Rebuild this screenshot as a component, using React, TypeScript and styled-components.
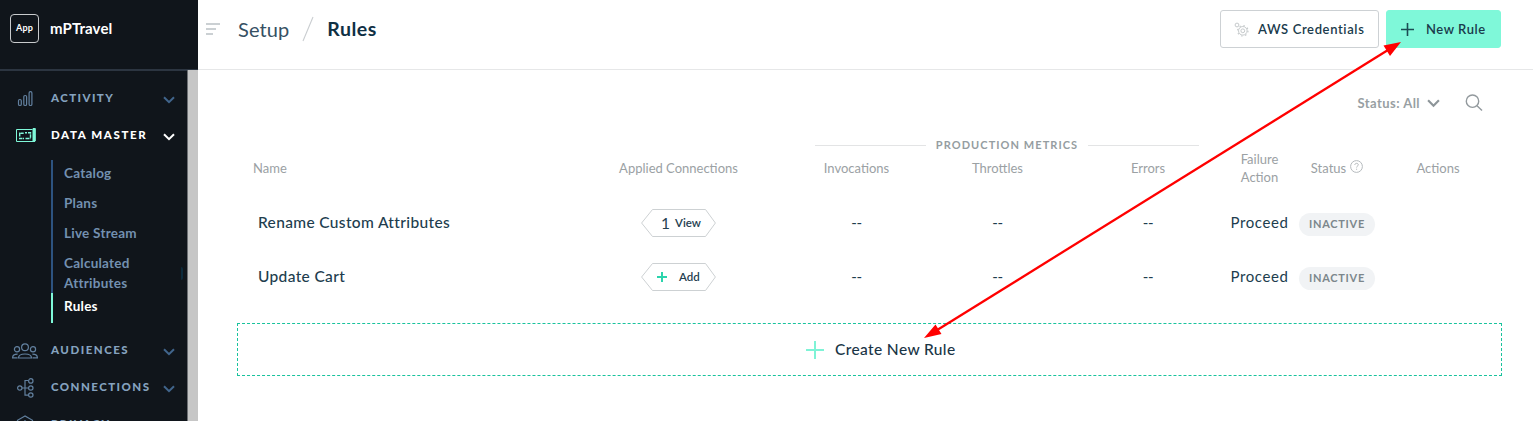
import React from "react";
import styled, { createGlobalStyle } from "styled-components";

const GlobalStyle = createGlobalStyle`
  * { box-sizing: border-box; }
  html, body { margin: 0; padding: 0; height: 421px; overflow: hidden; background: #fff; }
  body { font-family: Lato, "Open Sans", sans-serif; color: #1a3546; }
  svg { display: block; flex: none; }
`;

const Page = styled.div`
  position: relative;
  display: flex;
  width: 1533px;
  height: 421px;
  overflow: hidden;
`;

const Sidebar = styled.aside`
  display: flex;
  flex-direction: column;
  width: 198px;
  height: 421px;
  background: #10151b;
`;

const Brand = styled.div`
  display: flex;
  flex: none;
  gap: 11px;
  height: 70px;
  padding: 14px 0 0 10px;
  border-bottom: 1px solid #2c3541;
`;

const AppBadge = styled.div`
  width: 29px;
  height: 29px;
  border: 1px solid #c9cbcd;
  border-radius: 4px;
  color: #fff;
  font-size: 9px;
  font-weight: 700;
  letter-spacing: 0.1px;
  line-height: 26px;
  text-align: center;
`;

const BrandName = styled.div`
  color: #fff;
  font-size: 15px;
  font-weight: 700;
  letter-spacing: 0.1px;
  line-height: 28px;
`;

const NavScroll = styled.div`
  display: flex;
  flex: 1;
  min-height: 0;
`;

const Nav = styled.nav`
  position: relative;
  flex: 1;
  padding-top: 9px;
  border-top: 1px solid #2c3541;
  overflow: hidden;
`;

const ScrollTrack = styled.div`
  width: 11px;
  background: #c6c6c6;
  border-left: 1px solid #6d7074;
`;

const NavRow = styled.div<{ $active?: boolean }>`
  display: grid;
  grid-template-columns: 51px 1fr 24px;
  align-items: center;
  height: 37px;
  color: ${(p) => (p.$active ? "#fff" : "#85a2bf")};
`;

const NavIcon = styled.div`
  display: flex;
  justify-content: center;
  padding-right: 1px;
  color: #62809f;
`;

const NavLabel = styled.div<{ $spacing: number }>`
  margin-bottom: 1px;
  font-size: 11.5px;
  font-weight: 900;
  line-height: 20px;
  letter-spacing: ${(p) => p.$spacing}px;
  white-space: nowrap;
`;

const Chevron = styled.svg<{ $color: string }>`
  color: ${(p) => p.$color};
  margin-top: 2px;
`;

const SubNav = styled.div`
  margin: 6px 0 9px 51px;
`;

const SubItem = styled.div<{ $active?: boolean; $top?: number; $bottom?: number }>`
  padding: ${(p) => p.$top ?? 5}px 0 ${(p) => p.$bottom ?? 5}px 11px;
  border-left: 2px solid ${(p) => (p.$active ? "#7ff8d9" : "#2d5380")};
  color: ${(p) => (p.$active ? "#fff" : "#7390b0")};
  font-size: 13.5px;
  font-weight: 700;
  line-height: 20px;
  letter-spacing: 0.25px;
`;

const EdgeHandle = styled.div`
  position: absolute;
  top: 196px;
  right: 4px;
  width: 2px;
  height: 13px;
  border-radius: 0 2px 2px 0;
  background: #0c2a3c;
`;

const Main = styled.main`
  flex: 1;
  min-width: 0;
`;

const TopBar = styled.header`
  display: flex;
  align-items: center;
  height: 70px;
  padding: 0 32px 11px 8px;
  border-bottom: 1px solid #e6e7e8;
`;

const Crumb = styled.div<{ $current?: boolean }>`
  font-size: ${(p) => (p.$current ? 19.5 : 20)}px;
  line-height: 26px;
  font-weight: ${(p) => (p.$current ? 700 : 400)};
  letter-spacing: ${(p) => (p.$current ? 0.5 : 0.1)}px;
  color: ${(p) => (p.$current ? "#0f3044" : "#365063")};
`;

const Breadcrumb = styled.div`
  display: flex;
  align-items: center;
  flex: 1;
  gap: 13px;
  margin-left: 18px;
`;

const Button = styled.button<{ $primary?: boolean }>`
  display: flex;
  align-items: center;
  height: 38px;
  width: ${(p) => (p.$primary ? 115 : 159)}px;
  margin: 0 0 0 ${(p) => (p.$primary ? 7 : 0)}px;
  padding: 0 0 0 ${(p) => (p.$primary ? 14 : 13)}px;
  gap: ${(p) => (p.$primary ? 12 : 9)}px;
  border: 1px solid ${(p) => (p.$primary ? "#7ff8d9" : "#cdd1d4")};
  border-radius: 3px;
  background: ${(p) => (p.$primary ? "#7ff8d9" : "#fff")};
  color: #1a3b4c;
  font: 600 13px/20px Lato, sans-serif;
  letter-spacing: ${(p) => (p.$primary ? 0.55 : 0.63)}px;
  white-space: nowrap;
`;

const Content = styled.section`
  padding: 0 31px 0 39px;
`;

const Filters = styled.div`
  display: flex;
  justify-content: flex-end;
  align-items: center;
  height: 65px;
  padding-right: 19px;
`;

const StatusFilter = styled.div`
  display: flex;
  align-items: center;
  gap: 7px;
  margin-right: 25px;
  color: #989fa3;
  font-size: 13px;
  font-weight: 700;
  letter-spacing: 0.45px;
`;

const MetricsGroup = styled.div`
  display: flex;
  align-items: center;
  width: 384px;
  height: 18px;
  margin: 0 0 1px 578px;
  gap: 10px;
  color: #959da1;
  font-size: 11px;
  font-weight: 700;
  letter-spacing: 1.06px;
  white-space: nowrap;
`;

const Rule = styled.span`
  flex: 1;
  height: 1px;
  margin-top: 3px;
  background: #e3e4e5;
`;

const Row = styled.div<{ $head?: boolean }>`
  display: grid;
  grid-template-columns: 334px 215px 141px 141px 160px 63px 92px 110px;
  grid-template-rows: ${(p) => (p.$head ? 28 : 54)}px;
  align-items: center;
  justify-items: center;
  height: ${(p) => (p.$head ? 42 : 54)}px;
  font-size: ${(p) => (p.$head ? 13 : 15)}px;
  line-height: 18px;
  color: ${(p) => (p.$head ? "#9ba1a4" : "#213d4e")};
  text-align: center;
  white-space: nowrap;
`;

const HeadCell = styled.div<{ $name?: boolean }>`
  display: flex;
  align-items: center;
  gap: 4px;
  justify-self: ${(p) => (p.$name ? "start" : "center")};
  padding-left: ${(p) => (p.$name ? 16 : 0)}px;
`;

const HelpIcon = styled.svg`
  margin-bottom: 3px;
`;

const Table = styled.div`
  margin-bottom: 19px;
`;

const NameCell = styled.div`
  justify-self: start;
  padding-left: 21px;
  margin-bottom: 2px;
  font-weight: 500;
  font-size: 15.5px;
  letter-spacing: 0.35px;
`;

const Value = styled.div<{ $dashes?: boolean }>`
  margin-bottom: 2px;
  font-size: 15px;
  letter-spacing: ${(p) => (p.$dashes ? -0.3 : 0.6)}px;
`;

const TagShell = styled.div`
  position: relative;
  width: 75px;
  height: 28px;
`;

const TagOutline = styled.svg`
  position: absolute;
  inset: 0;
`;

const TagContent = styled.div<{ $gap: number; $left: number }>`
  position: relative;
  display: flex;
  align-items: center;
  height: 28px;
  gap: ${(p) => p.$gap}px;
  padding-left: ${(p) => p.$left}px;
  font-size: 11.5px;
  font-weight: 600;
  color: #24404f;
`;

const Count = styled.span`
  font-size: 15.5px;
  font-weight: 400;
`;

const Badge = styled.div`
  width: 76px;
  height: 23px;
  margin-top: 3px;
  border-radius: 12px;
  background: #f1f3f5;
  color: #7c878c;
  font-size: 11px;
  font-weight: 700;
  line-height: 22px;
  letter-spacing: 0.7px;
`;

const CreateBox = styled.div`
  display: flex;
  align-items: center;
  height: 53px;
  padding-left: 568px;
  gap: 11px;
  border: 1px dashed #19c39d;
  color: #1a3546;
  font-size: 15.5px;
  font-weight: 500;
  letter-spacing: 0.38px;
`;

const CreateLabel = styled.span`
  margin-bottom: 1px;
`;

const Annotation = styled.svg`
  position: absolute;
  inset: 0;
  pointer-events: none;
`;

function DownArrow({ color, width = 12 }: { color: string; width?: number }) {
  return (
    <Chevron $color={color} width={width} height={(width * 8) / 12} viewBox="0 0 12 8" fill="none" stroke="currentColor" strokeWidth="2">
      <path d="M1 1.2 6 6.2 11 1.2" />
    </Chevron>
  );
}

function Plus({ size, color, width }: { size: number; color: string; width: number }) {
  const c = size / 2;
  return (
    <svg width={size} height={size} stroke={color} strokeWidth={width}>
      <path d={`M0 ${c}H${size}M${c} 0V${size}`} />
    </svg>
  );
}

const ActivityIcon = () => (
  <svg width="16" height="16" viewBox="0 0 16 16" fill="none" stroke="currentColor" strokeWidth="1.2">
    <rect x="1.500" y="8.500" width="2.800" height="6" rx="1.300" />
    <rect x="6.800" y="4.500" width="2.800" height="10" rx="1.300" />
    <rect x="12.100" y=".6" width="2.800" height="13.900" rx="1.300" />
  </svg>
);

const DataIcon = () => (
  <svg width="21" height="15" viewBox="0 0 21 15" fill="none" stroke="#7ff8d9">
    <path d="M17.500 1.500H1.500v12h18.500" />
    <path d="M18 .5h2.300v12.500H18z" fill="#7ff8d9" />
    <path d="M4.700 8.500V5.200h4M10 4.800h2M13 4.800h2.500V10M4 10.500h5M10.500 10.500h5" strokeWidth="1.400" strokeDasharray="3.500 .5" />
  </svg>
);

const AudienceIcon = () => (
  <svg width="26" height="16" viewBox="0 0 26 16" fill="none" stroke="currentColor" strokeWidth="1.2">
    <circle cx="13" cy="4.200" r="3.400" />
    <circle cx="5" cy="6.200" r="2.600" />
    <circle cx="21" cy="6.200" r="2.600" />
    <path d="M6.500 15c0-2.700 2-4 6.500-4s6.500 1.300 6.500 4zM5.500 14.800H.6c0-2.500 1.600-3.600 5-3.600M20.500 14.800h4.900c0-2.500-1.600-3.600-5-3.600" />
  </svg>
);

const ConnectionIcon = () => (
  <svg width="17" height="20" viewBox="0 0 17 20" fill="none" stroke="currentColor" strokeWidth="1.2">
    <circle cx="2.8" cy="10" r="2.2" />
    <circle cx="13.8" cy="2.9" r="2.2" />
    <circle cx="13.8" cy="10" r="2.2" />
    <circle cx="13.8" cy="17" r="2.2" />
    <path d="M5 10h6.5M11.5 2.5H8V17.2h3.5" />
  </svg>
);

const PrivacyIcon = () => (
  <svg width="18" height="20" viewBox="0 0 18 20" fill="none" stroke="currentColor" strokeWidth="1.2">
    <path d="M9 1 1.500 5.300v6.700c0 3.500 3.500 6 7.500 7 4-1 7.500-3.500 7.500-7V5.300z" />
    <path d="M9 5v6" />
  </svg>
);

const GearsIcon = () => (
  <svg width="15" height="15" viewBox="0 0 15 15" fill="none" stroke="#c6cacc">
    <circle cx="8.800" cy="8.800" r="4.300" />
    <circle cx="8.800" cy="8.800" r="1.900" />
    <circle cx="8.800" cy="8.800" r="5.200" strokeWidth="1.200" strokeDasharray="1.500 2.584" />
    <circle cx="3" cy="3" r="1.900" />
  </svg>
);

const rules = [
  { name: "Rename Custom Attributes", connections: 1 },
  { name: "Update Cart", connections: 0 },
];

function ConnectionTag({ count }: { count: number }) {
  return (
    <TagShell>
      <TagOutline width="75" height="28" fill="#fff" stroke="#cdd1d3">
        <path d="M.6 14 11.500.5h53L74.400 14 64.500 27.500h-53z" />
      </TagOutline>
      {count > 0 ? (
        <TagContent $gap={5} $left={20}>
          <Count>{count}</Count>
          <span>View</span>
        </TagContent>
      ) : (
        <TagContent $gap={12} $left={16}>
          <Plus size={10} color="#2bd4ac" width={2} />
          <span>Add</span>
        </TagContent>
      )}
    </TagShell>
  );
}

export default function App() {
  return (
    <Page>
      <GlobalStyle />
      <Sidebar>
        <Brand>
          <AppBadge>App</AppBadge>
          <BrandName>mPTravel</BrandName>
        </Brand>
        <NavScroll>
          <Nav>
            <NavRow>
              <NavIcon><ActivityIcon /></NavIcon>
              <NavLabel $spacing={1.4}>ACTIVITY</NavLabel>
              <DownArrow color="#41658c" />
            </NavRow>
            <NavRow $active>
              <NavIcon><DataIcon /></NavIcon>
              <NavLabel $spacing={1.6}>DATA MASTER</NavLabel>
              <DownArrow color="#fff" />
            </NavRow>
            <SubNav>
              <SubItem $top={3}>Catalog</SubItem>
              <SubItem>Plans</SubItem>
              <SubItem>Live Stream</SubItem>
              <SubItem $bottom={0}>Calculated<br />Attributes</SubItem>
              <SubItem $active $top={3} $bottom={7}>Rules</SubItem>
            </SubNav>
            <NavRow>
              <NavIcon><AudienceIcon /></NavIcon>
              <NavLabel $spacing={1.5}>AUDIENCES</NavLabel>
              <DownArrow color="#41658c" />
            </NavRow>
            <NavRow>
              <NavIcon><ConnectionIcon /></NavIcon>
              <NavLabel $spacing={1.45}>CONNECTIONS</NavLabel>
              <DownArrow color="#41658c" />
            </NavRow>
            <NavRow>
              <NavIcon><PrivacyIcon /></NavIcon>
              <NavLabel $spacing={1.6}>PRIVACY</NavLabel>
            </NavRow>
            <EdgeHandle />
          </Nav>
          <ScrollTrack />
        </NavScroll>
      </Sidebar>
      <Main>
        <TopBar>
          <svg width="14" height="12" stroke="#cbd0d3" strokeWidth="2">
            <path d="M0 1h14M0 6h10M0 11h7" />
          </svg>
          <Breadcrumb>
            <Crumb>Setup</Crumb>
            <svg width="12" height="26" stroke="#c9cdd0" strokeWidth="1.1">
              <path d="M11 1 1 25" />
            </svg>
            <Crumb $current>Rules</Crumb>
          </Breadcrumb>
          <Button><GearsIcon />AWS Credentials</Button>
          <Button $primary><Plus size={13} color="#1c4c54" width={1.6} />New Rule</Button>
        </TopBar>
        <Content>
          <Filters>
            <StatusFilter>
              Status: All
              <DownArrow color="#8d9599" width={13} />
            </StatusFilter>
            <svg width="18" height="18" viewBox="0 0 18 18" fill="none" stroke="#92999d" strokeWidth="1.400">
              <circle cx="7.500" cy="7.200" r="6.200" />
              <path d="m12 11.800 5 4.800" />
            </svg>
          </Filters>
          <MetricsGroup>
            <Rule />PRODUCTION METRICS<Rule />
          </MetricsGroup>
          <Table>
            <Row $head>
              <HeadCell $name>Name</HeadCell>
              <HeadCell>Applied Connections</HeadCell>
              <HeadCell>Invocations</HeadCell>
              <HeadCell>Throttles</HeadCell>
              <HeadCell>Errors</HeadCell>
              <HeadCell>Failure<br />Action</HeadCell>
              <HeadCell>
                Status
                <HelpIcon width="13" height="13" viewBox="0 0 13 13" fill="none" stroke="#b5babd">
                  <circle cx="6.500" cy="6.500" r="5.900" />
                  <path d="M4.800 5c0-2.200 3.500-2.200 3.500-.2 0 1.300-1.700 1.300-1.700 2.700M6.600 8.700v1.100" />
                </HelpIcon>
              </HeadCell>
              <HeadCell>Actions</HeadCell>
            </Row>
            {rules.map((r) => (
              <Row key={r.name}>
                <NameCell>{r.name}</NameCell>
                <ConnectionTag count={r.connections} />
                <Value $dashes>--</Value>
                <Value $dashes>--</Value>
                <Value $dashes>--</Value>
                <Value>Proceed</Value>
                <Badge>INACTIVE</Badge>
              </Row>
            ))}
          </Table>
          <CreateBox>
            <Plus size={18} color="#7ff3d6" width={2} />
            <CreateLabel>Create New Rule</CreateLabel>
          </CreateBox>
        </Content>
      </Main>
      <Annotation width="1533" height="421">
        <path d="M1388 50 938 329.500" stroke="#f00" strokeWidth="2.300" />
        <path d="M1401 42 1383.500 45.500 1390 56zM924 338 935.500 324.500 941.500 334z" fill="#f00" />
      </Annotation>
    </Page>
  );
}
